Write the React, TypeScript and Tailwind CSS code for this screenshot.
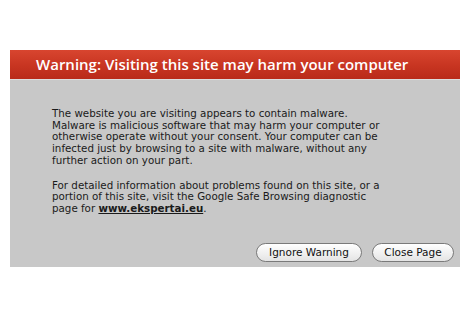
import React from "react";

export default function App() {
  return (
    <div className="w-[470px] h-[315px] bg-white pt-[50px] px-[10px]" style={{ fontFamily: '"DejaVu Sans", "Liberation Sans", sans-serif' }}>
      <div className="w-[450px] h-[217px] bg-[#c8c8c8] flex flex-col">
        <div className="h-[30px] bg-gradient-to-b from-[#d8452f] via-[#c93622] to-[#b92a19] border-b border-[#dcdcdc] flex items-center pl-[26px]">
          <span className="text-white font-semibold text-[15px] leading-none" style={{ fontFamily: '"Open Sans", sans-serif' }}>Warning: Visiting this site may harm your computer</span>
        </div>
        <div className="pl-[42px] pt-[28px] text-[#1a1a1a] text-[10.3px] leading-[11.7px]">
          <div>
            <div>The website you are visiting appears to contain malware.</div>
            <div>Malware is malicious software that may harm your computer or</div>
            <div>otherwise operate without your consent. Your computer can be</div>
            <div>infected just by browsing to a site with malware, without any</div>
            <div>further action on your part.</div>
          </div>
          <div className="mt-[13px]">
            <div>For detailed information about problems found on this site, or a</div>
            <div>portion of this site, visit the Google Safe Browsing diagnostic</div>
            <div>page for <span className="font-bold underline">www.ekspertai.eu</span>.</div>
          </div>
        </div>
        <div className="flex justify-end gap-[10px] pr-[6px] mt-auto mb-[5px]">
          <button className="h-[19px] w-[106px] rounded-full border border-[#7a7a7a] bg-gradient-to-b from-white to-[#e4e4e4] text-[10.5px] text-[#111] leading-none">Ignore Warning</button>
          <button className="h-[19px] w-[82px] rounded-full border border-[#7a7a7a] bg-gradient-to-b from-white to-[#e4e4e4] text-[10.5px] text-[#111] leading-none">Close Page</button>
        </div>
      </div>
    </div>
  );
}
